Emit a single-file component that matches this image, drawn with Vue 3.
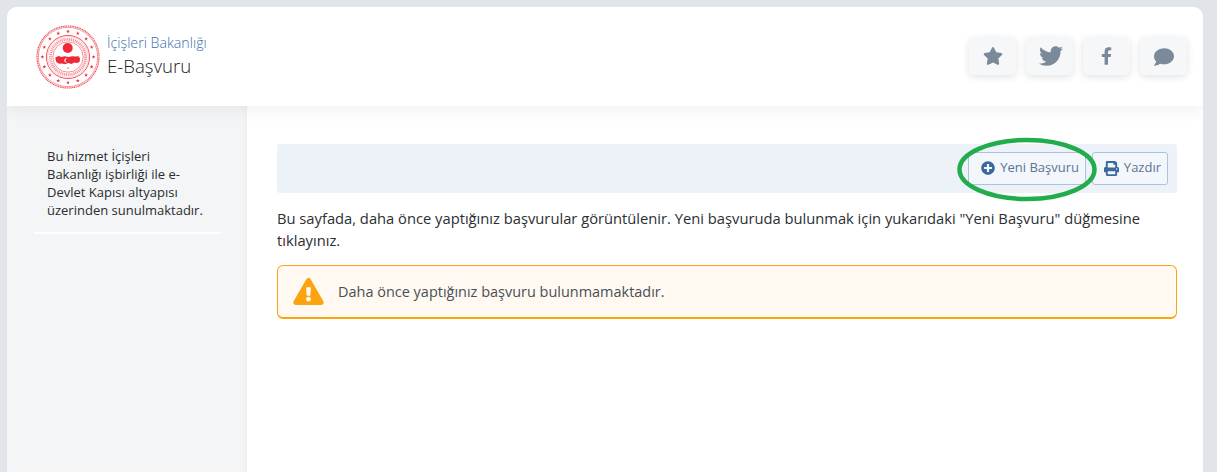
<script setup>
const icons = [
  { name: 'star', vb: '0 0 576 512', w: 20, h: 18, d: 'M259.3 17.8L194 150.2 47.9 171.5c-26.2 3.8-36.7 36.1-17.7 54.6l105.7 103-25 145.5c-4.5 26.3 23.2 46 46.4 33.7L288 439.6l130.7 68.7c23.2 12.2 50.9-7.4 46.4-33.7l-25-145.5 105.7-103c19-18.5 8.5-50.8-17.7-54.6L382 150.2 316.7 17.8c-11.7-23.6-45.6-23.9-57.4 0z' },
  { name: 'twitter', vb: '0 0 512 512', w: 24, h: 24, d: 'M459.37 151.716c.325 4.548.325 9.097.325 13.645 0 138.72-105.583 298.558-298.558 298.558-59.452 0-114.68-17.219-161.137-47.106 8.447.974 16.568 1.299 25.34 1.299 49.055 0 94.213-16.568 130.274-44.832-46.132-.975-84.792-31.188-98.112-72.772 6.498.974 12.995 1.624 19.818 1.624 9.421 0 18.843-1.3 27.614-3.573-48.081-9.747-84.143-51.98-84.143-102.985v-1.299c13.969 7.797 30.214 12.67 47.431 13.319-28.264-18.843-46.781-51.005-46.781-87.391 0-19.492 5.197-37.36 14.294-52.954 51.655 63.675 129.3 105.258 216.365 109.807-1.624-7.797-2.599-15.918-2.599-24.04 0-57.828 46.782-104.934 104.934-104.934 30.213 0 57.502 12.67 76.67 33.137 23.715-4.548 46.456-13.32 66.599-25.34-7.798 24.366-24.366 44.833-46.132 57.827 21.117-2.273 41.584-8.122 60.426-16.243-14.292 20.791-32.161 39.308-52.628 54.253z' },
  { name: 'facebook', vb: '0 0 320 512', w: 11, h: 18, d: 'M279.14 288l14.22-92.66h-88.91v-60.13c0-25.35 12.42-50.06 52.24-50.06h40.42V6.26S260.43 0 225.36 0c-73.22 0-121.08 44.38-121.08 124.72v70.62H22.89V288h81.39v224h100.17V288z' },
  { name: 'comment', vb: '0 0 512 512', w: 20, h: 20, d: 'M256 32C114.6 32 0 125.1 0 240c0 49.6 21.4 95 57 130.7C44.5 421.1 2.7 466 2.2 466.5c-2.2 2.3-2.8 5.7-1.5 8.7S4.8 480 8 480c66.3 0 116-31.8 146.1-51.4 31.7 10.6 66.6 15.4 101.9 15.4 141.4 0 256-93.1 256-208S397.4 32 256 32z' }
]
function starPoints(cx, cy, r) {
  const pts = []
  for (let k = 0; k < 10; k++) {
    const rad = k % 2 === 0 ? r : r * 0.42
    const a = (k * Math.PI) / 5 - Math.PI / 2
    pts.push(`${(cx + rad * Math.cos(a)).toFixed(2)},${(cy + rad * Math.sin(a)).toFixed(2)}`)
  }
  return pts.join(' ')
}
const stars = Array.from({ length: 16 }, (_, i) => {
  const a = (i * 2 * Math.PI) / 16 - Math.PI / 2
  return starPoints(32 + 25.6 * Math.cos(a), 32 + 25.6 * Math.sin(a), 2)
})
</script>

<template>
  <div class="page">
    <div class="card">
      <header class="header">
        <div class="brand">
          <svg class="logo" viewBox="0 0 64 64" aria-hidden="true">
            <circle cx="32" cy="32" r="31" fill="none" stroke="#ef4a55" stroke-width="1.2" stroke-dasharray="1.2 0.6" />
            <circle cx="32" cy="32" r="29.7" fill="none" stroke="#ef4a55" stroke-width="0.6" />
            <circle cx="32" cy="32" r="21.6" fill="none" stroke="#ef4a55" stroke-width="0.9" />
            <circle cx="32" cy="32" r="20.3" fill="none" stroke="#f27a82" stroke-width="0.4" />
            <circle cx="32" cy="32" r="17.6" fill="none" stroke="#f58f97" stroke-width="2.8" stroke-dasharray="1.1 0.8" />
            <circle cx="32" cy="32" r="15.2" fill="none" stroke="#ef4a55" stroke-width="0.6" />
            <polygon v-for="(s, i) in stars" :key="i" :points="s" fill="#ee3542" />
            <circle cx="31.7" cy="23" r="5" fill="#ee2a38" />
            <path d="M19.5 32.2l3.5-1.2 2.2 1 3.5-.8 3.8.8 3.6-.8 3.4.4 3.2-.4 1.4 2.6-.6 3.2-2.4 1-3-.4-2.4 1.4-3.6-1-2.8 1.2-3.6-.8-2.6.4-2.6-1.6-1-2.6z" fill="#ee2a38" />
            <path d="M31.4 33.4a2.2 2.2 0 1 0 0 4 1.8 1.8 0 1 1 0-4z" fill="#fff" />
            <circle cx="32" cy="43" r="0.7" fill="#ee3542" />
          </svg>
          <div class="titles">
            <div class="ministry">İçişleri Bakanlığı</div>
            <div class="service">E-Başvuru</div>
          </div>
        </div>
        <div class="actions">
          <button v-for="ic in icons" :key="ic.name" class="icon-btn" :class="'is-' + ic.name" type="button" :aria-label="ic.name">
            <svg :viewBox="ic.vb" :width="ic.w" :height="ic.h" fill="#7a8a99"><path :d="ic.d" /></svg>
          </button>
        </div>
      </header>

      <div class="body">
        <aside class="sidebar">
          <p class="note">Bu hizmet İçişleri Bakanlığı işbirliği ile e-Devlet Kapısı altyapısı üzerinden sunulmaktadır.</p>
        </aside>
        <main class="main">
          <div class="toolbar">
            <button class="btn new" type="button">
              <svg viewBox="0 0 512 512" width="14" height="14" fill="#3a6a9c"><path d="M256 8C119 8 8 119 8 256s111 248 248 248 248-111 248-248S393 8 256 8zm144 276c0 6.6-5.4 12-12 12h-92v92c0 6.6-5.4 12-12 12h-56c-6.6 0-12-5.4-12-12v-92h-92c-6.6 0-12-5.4-12-12v-56c0-6.6 5.4-12 12-12h92v-92c0-6.6 5.4-12 12-12h56c6.6 0 12 5.4 12 12v92h92c6.6 0 12 5.4 12 12v56z" /></svg>
              Yeni Başvuru
            </button>
            <button class="btn print" type="button">
              <svg viewBox="0 0 512 512" width="15" height="15" fill="#3a6a9c"><path d="M448 192V77.25c0-8.49-3.37-16.62-9.37-22.63L393.37 9.37c-6-6-14.14-9.37-22.63-9.37H96C78.33 0 64 14.33 64 32v160c-35.35 0-64 28.65-64 64v112c0 8.84 7.16 16 16 16h48v96c0 17.67 14.33 32 32 32h320c17.67 0 32-14.33 32-32v-96h48c8.84 0 16-7.16 16-16V256c0-35.35-28.65-64-64-64zm-64 256H128v-96h256v96zm0-224H128V64h192v48c0 8.84 7.16 16 16 16h48v96zm48 72c-13.25 0-24-10.75-24-24 0-13.26 10.75-24 24-24s24 10.74 24 24c0 13.25-10.75 24-24 24z" /></svg>
              Yazdır
            </button>
            <svg class="oval" viewBox="0 0 144 72" width="144" height="72" aria-hidden="true">
              <ellipse cx="72" cy="35.5" rx="67.5" ry="29.5" fill="none" stroke="#22ac4c" stroke-width="4.5" />
            </svg>
          </div>
          <p class="intro">Bu sayfada, daha önce yaptığınız başvurular görüntülenir. Yeni başvuruda bulunmak için yukarıdaki "Yeni Başvuru" düğmesine tıklayınız.</p>
          <div class="alert">
            <svg viewBox="0 0 576 512" width="31" height="27" fill="#fca311"><path d="M569.517 440.013C587.975 472.007 564.806 512 527.94 512H48.054c-36.937 0-59.999-40.055-41.577-71.987L246.423 23.985c18.467-32.009 64.72-31.951 83.154 0l239.94 416.028zM288 354c-25.405 0-46 20.595-46 46s20.595 46 46 46 46-20.595 46-46-20.595-46-46-46zm-43.673-165.346l7.418 136c.347 6.364 5.609 11.346 11.982 11.346h48.546c6.373 0 11.635-4.982 11.982-11.346l7.418-136c.375-6.874-5.098-12.654-11.982-12.654h-63.383c-6.884 0-12.356 5.78-11.981 12.654z" /></svg>
            <span>Daha önce yaptığınız başvuru bulunmamaktadır.</span>
          </div>
        </main>
      </div>
    </div>
  </div>
</template>

<style>
html, body { margin: 0; background: #e1e5e9; overflow: hidden; }
</style>

<style scoped>
.page {
  box-sizing: border-box;
  height: 472px;
  padding: 7px 14px 0 7px;
  font-family: "Open Sans", sans-serif;
  overflow: hidden;
}
.card {
  height: 465px;
  background: #fff;
  border-radius: 10px 10px 0 0;
  display: flex;
  flex-direction: column;
  overflow: hidden;
}
.header {
  position: relative;
  z-index: 2;
  flex: 0 0 99px;
  display: flex;
  align-items: center;
  justify-content: space-between;
  padding: 0 16px 0 29px;
  background: #fff;
  box-shadow: 0 4px 14px rgba(60, 70, 80, 0.08);
}
.brand { display: flex; align-items: center; gap: 7px; }
.logo { width: 64px; height: 64px; display: block; }
.titles { margin-top: -2px; }
.ministry {
  font-size: 14.2px;
  font-weight: 300;
  line-height: 20px;
  color: #3a70ad;
}
.service {
  font-size: 18.6px;
  font-weight: 300;
  line-height: 26px;
  color: #222;
}
.actions { display: flex; gap: 10px; margin-top: -1px; }
.icon-btn {
  width: 47px;
  height: 38px;
  padding: 0;
  border: 0;
  border-radius: 5px;
  background: #f5f7f9;
  box-shadow: 0 2px 7px rgba(50, 60, 70, 0.14);
  display: flex;
  align-items: center;
  justify-content: center;
}
.is-twitter { padding-left: 3px; }
.is-comment { padding-top: 2px; }
.body { flex: 1; display: flex; min-height: 0; }
.sidebar {
  flex: 0 0 240px;
  box-sizing: border-box;
  background: #f3f5f7;
  padding: 41px 27px 0 27px;
  box-shadow: inset -6px 0 6px -6px rgba(60, 70, 80, 0.06);
}
.note {
  margin: 0;
  padding: 0 13px 13px;
  font-size: 13px;
  line-height: 18px;
  color: #2a2d30;
  border-bottom: 2px solid #fff;
}
.main { flex: 1; padding: 38px 26px 0 30px; min-width: 0; }
.toolbar {
  position: relative;
  height: 49px;
  box-sizing: border-box;
  background: #edf1f8;
  border-radius: 3px;
  display: flex;
  align-items: center;
  justify-content: flex-end;
  gap: 6px;
  padding: 0 9px 0 0;
}
.btn {
  height: 33px;
  box-sizing: border-box;
  border: 1px solid #a9c4dc;
  border-radius: 3px;
  background: #f3f6fb;
  color: #5a7592;
  font-family: inherit;
  font-size: 13px;
  display: inline-flex;
  align-items: center;
  justify-content: flex-end;
  gap: 5px;
  padding: 0 6px 3px 0;
}
.btn svg { margin-top: 2px; }
.new { width: 118px; }
.print { width: 76px; }
.oval {
  position: absolute;
  left: 678px;
  top: -10px;
  pointer-events: none;
}
.intro {
  margin: 14px 0 0;
  font-size: 14.73px;
  line-height: 22px;
  color: #2b2f33;
}
.alert {
  margin-top: 14px;
  height: 54px;
  box-sizing: border-box;
  border: 1px solid #fca311;
  border-bottom-width: 2px;
  border-radius: 6px;
  background: #fff9f2;
  display: flex;
  align-items: center;
  gap: 14px;
  padding: 0 15px;
  font-size: 14.47px;
  color: #4a4f55;
}
</style>
